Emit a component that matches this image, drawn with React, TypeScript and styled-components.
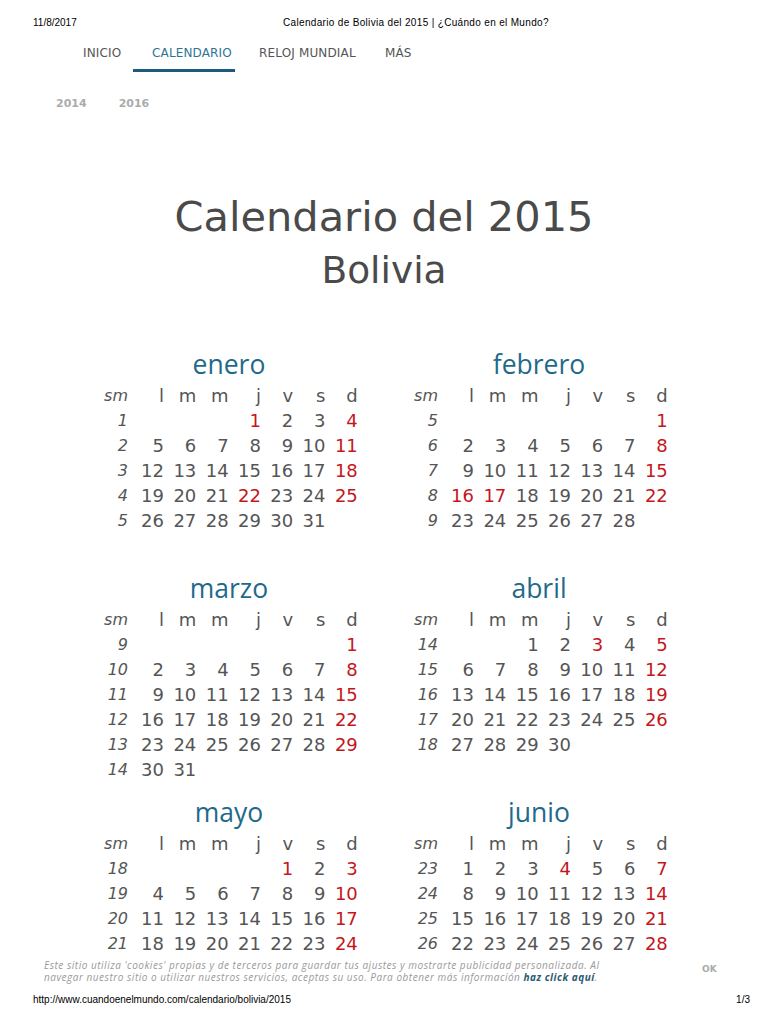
import React from "react";
import styled, { createGlobalStyle } from "styled-components";

const GlobalStyle = createGlobalStyle`
  html, body { margin: 0; padding: 0; background: #ffffff; }
  body { font-family: "DejaVu Sans", Verdana, sans-serif; color: #555555; }
`;

const Page = styled.div`
  width: 768px;
  height: 1024px;
  display: flex;
  flex-direction: column;
  overflow: hidden;
  background: #ffffff;
`;

const PrintHeader = styled.header`
  display: grid;
  grid-template-columns: 250px 1fr;
  padding: 17px 0 0 33px;
  height: 12px;
  font-family: "Liberation Sans", Arial, sans-serif;
  font-size: 10px;
  line-height: 12px;
  color: #000000;
`;

const PrintTitle = styled.span`
  letter-spacing: 0.33px;
`;

const Main = styled.main`
  flex: 1;
  min-height: 0;
  overflow: hidden;
`;

const Nav = styled.nav`
  display: flex;
  gap: 27px;
  padding-left: 83px;
  height: 43px;
`;

const NavItem = styled.a<{ $active?: boolean; $w: number }>`
  position: relative;
  display: block;
  width: ${(p) => p.$w}px;
  padding-top: 17px;
  box-sizing: border-box;
  font-family: "DejaVu Sans", Verdana, sans-serif;
  font-size: 12px;
  line-height: 15px;
  letter-spacing: 0.15px;
  white-space: nowrap;
  color: ${(p) => (p.$active ? "#2d7597" : "#555555")};
  text-decoration: none;
  &::after {
    content: "";
    display: ${(p) => (p.$active ? "block" : "none")};
    position: absolute;
    left: -19px;
    right: -3px;
    bottom: 0;
    height: 3px;
    background: #1b5c7a;
  }
`;

const Years = styled.div`
  display: flex;
  gap: 32px;
  margin-top: 24px;
  padding-left: 56px;
  height: 16px;
  line-height: 16px;
`;

const YearLink = styled.a`
  font-family: "DejaVu Sans", Verdana, sans-serif;
  font-weight: bold;
  font-size: 11px;
  color: #ababab;
  text-decoration: none;
`;

const Title = styled.h1`
  margin: 81px 0 0;
  height: 48px;
  line-height: 48px;
  text-align: center;
  font-family: "DejaVu Sans", Verdana, sans-serif;
  font-weight: normal;
  font-size: 41.5px;
  color: #4a4a4a;
`;

const Subtitle = styled.h2`
  margin: 0;
  height: 58px;
  line-height: 58px;
  text-align: center;
  font-family: "DejaVu Sans", Verdana, sans-serif;
  font-weight: normal;
  font-size: 37.5px;
  color: #4a4a4a;
`;

const MonthsGrid = styled.div`
  display: grid;
  grid-template-columns: 282px 282px;
  column-gap: 28px;
  margin-top: 43px;
  padding-left: 88px;
`;

const MonthBlock = styled.section`
  height: 224px;
`;

const MonthName = styled.h3`
  margin: 0;
  height: 41px;
  line-height: 44px;
  text-align: center;
  font-family: "Open Sans", sans-serif;
  font-weight: normal;
  font-size: 26.5px;
  color: #1f6a8b;
`;

const DayTable = styled.div`
  display: grid;
  grid-template-columns: 40px 36px repeat(6, 32.3px);
  grid-auto-rows: 25px;
  align-items: center;
  justify-items: end;
`;

const Cell = styled.span<{ $red?: boolean; $week?: boolean }>`
  font-family: "DejaVu Sans", Verdana, sans-serif;
  font-size: ${(p) => (p.$week ? "16px" : "18px")};
  font-style: ${(p) => (p.$week ? "italic" : "normal")};
  line-height: 25px;
  color: ${(p) => (p.$red ? "#c4161c" : "#555555")};
`;

const CookieBar = styled.div`
  flex: none;
  height: 28px;
  display: flex;
  align-items: flex-start;
  padding: 3px 0 0 44px;
  box-sizing: border-box;
  background: #ffffff;
`;

const CookieText = styled.p`
  margin: 0;
  width: 620px;
  font-family: "Open Sans", sans-serif;
  font-style: italic;
  font-size: 10px;
  line-height: 12px;
  letter-spacing: 0.52px;
  white-space: nowrap;
  color: #9a9a9a;
`;

const CookieLink = styled.a`
  font-weight: bold;
  color: #2b5a70;
  text-decoration: none;
`;

const OkButton = styled.button`
  margin: 5px 0 0 38px;
  padding: 0;
  border: 0;
  background: transparent;
  font-family: "DejaVu Sans", Verdana, sans-serif;
  font-weight: bold;
  font-size: 9px;
  color: #a9a9a9;
`;

const PrintFooter = styled.footer`
  flex: none;
  display: flex;
  justify-content: space-between;
  height: 40px;
  padding: 10px 18px 0 33px;
  box-sizing: border-box;
  font-family: "Liberation Sans", Arial, sans-serif;
  font-size: 10px;
  line-height: 12px;
  color: #000000;
`;

const MONTHS = ["enero", "febrero", "marzo", "abril", "mayo", "junio"];
const HEADERS = ["l", "m", "m", "j", "v", "s", "d"];
const HOLIDAYS = new Set(["0-1", "0-22", "1-16", "1-17", "3-3", "4-1", "5-4"]);
const YEAR = 2015;

const NAV = [
  { label: "INICIO", w: 42 },
  { label: "CALENDARIO", w: 80, active: true },
  { label: "RELOJ MUNDIAL", w: 99 },
  { label: "MÁS", w: 26 },
];

function isoWeek(y: number, m: number, d: number): number {
  const t = new Date(Date.UTC(y, m, d));
  const dayNum = t.getUTCDay() || 7;
  t.setUTCDate(t.getUTCDate() + 4 - dayNum);
  const yearStart = new Date(Date.UTC(t.getUTCFullYear(), 0, 1));
  return Math.ceil(((t.getTime() - yearStart.getTime()) / 86400000 + 1) / 7);
}

type Row = { week: number; days: (number | null)[] };

function buildMonth(m: number): Row[] {
  const first = new Date(YEAR, m, 1);
  const offset = (first.getDay() + 6) % 7;
  const total = new Date(YEAR, m + 1, 0).getDate();
  const rows: Row[] = [];
  const count = Math.ceil((offset + total) / 7);
  for (let r = 0; r < count; r++) {
    const days: (number | null)[] = [];
    for (let c = 0; c < 7; c++) {
      const n = r * 7 + c - offset + 1;
      days.push(n >= 1 && n <= total ? n : null);
    }
    const mondayDate = r * 7 - offset + 1;
    rows.push({ week: isoWeek(YEAR, m, mondayDate), days });
  }
  return rows;
}

function Month({ index }: { index: number }) {
  const rows = buildMonth(index);
  return (
    <MonthBlock>
      <MonthName>{MONTHS[index]}</MonthName>
      <DayTable>
        <Cell $week>sm</Cell>
        {HEADERS.map((h, i) => (
          <Cell key={"h" + i}>{h}</Cell>
        ))}
        {rows.map((row, ri) => (
          <React.Fragment key={ri}>
            <Cell $week>{row.week}</Cell>
            {row.days.map((d, ci) => (
              <Cell
                key={ci}
                $red={d !== null && (ci === 6 || HOLIDAYS.has(index + "-" + d))}
              >
                {d ?? ""}
              </Cell>
            ))}
          </React.Fragment>
        ))}
      </DayTable>
    </MonthBlock>
  );
}

export default function App() {
  return (
    <>
      <GlobalStyle />
      <Page>
        <PrintHeader>
          <span>11/8/2017</span>
          <PrintTitle>Calendario de Bolivia del 2015 | ¿Cuándo en el Mundo?</PrintTitle>
        </PrintHeader>
        <Main>
          <Nav>
            {NAV.map((n) => (
              <NavItem key={n.label} href="#" $w={n.w} $active={n.active}>
                {n.label}
              </NavItem>
            ))}
          </Nav>
          <Years>
            <YearLink href="#">2014</YearLink>
            <YearLink href="#">2016</YearLink>
          </Years>
          <Title>Calendario del 2015</Title>
          <Subtitle>Bolivia</Subtitle>
          <MonthsGrid>
            {MONTHS.map((_, i) => (
              <Month key={i} index={i} />
            ))}
          </MonthsGrid>
        </Main>
        <CookieBar>
          <CookieText>
            Este sitio utiliza 'cookies' propias y de terceros para guardar tus ajustes y mostrarte publicidad personalizada. Al
            <br />
            navegar nuestro sitio o utilizar nuestros servicios, aceptas su uso. Para obtener más información{" "}
            <CookieLink href="#">haz click aquí</CookieLink>.
          </CookieText>
          <OkButton>OK</OkButton>
        </CookieBar>
        <PrintFooter>
          <span>http://www.cuandoenelmundo.com/calendario/bolivia/2015</span>
          <span>1/3</span>
        </PrintFooter>
      </Page>
    </>
  );
}
